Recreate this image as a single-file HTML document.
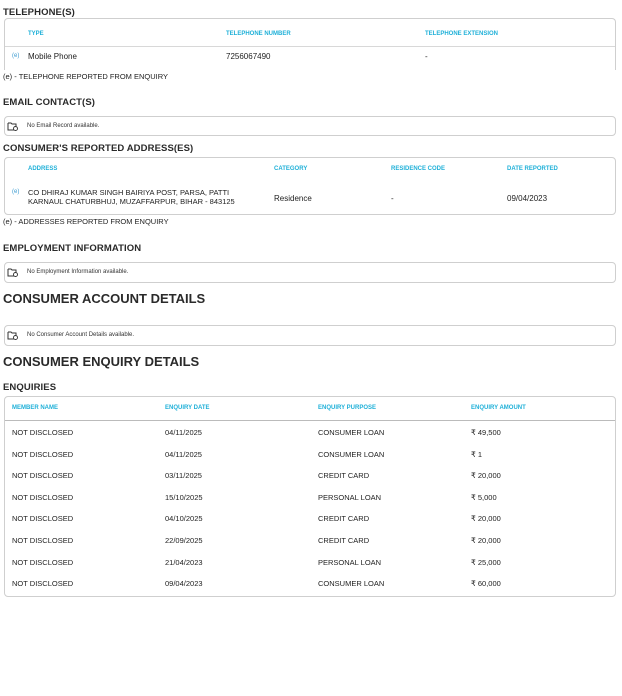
<!DOCTYPE html><html><head><style>
*{margin:0;padding:0;box-sizing:border-box}
body{width:622px;height:696px;background:#fff;font-family:"Liberation Sans",sans-serif;color:#222;position:relative;overflow:hidden}
.a{position:absolute;white-space:nowrap}
.h{font-weight:bold;font-size:9.5px;color:#2a2a2a;letter-spacing:.1px}
.H{font-weight:bold;font-size:13px;color:#2a2a2a}
.th{font-weight:bold;font-size:6px;color:#1fb0d8}
.t{font-size:8px;color:#222}
.s{font-size:7.5px;color:#222}
.box{position:absolute;left:4px;width:612px;border:1px solid #cfcfcf;border-radius:4px}
.e{font-size:6px;color:#3a9ad0}
.ic{position:absolute;left:7px;width:11px;height:9px}
.n{font-size:6px;color:#333}
</style></head><body>
<div class="a h" style="left:3px;top:7px">TELEPHONE(S)</div>
<div class="box" style="top:18px;height:52px;border-bottom:none;border-radius:4px 4px 0 0"></div>
<div class="a" style="left:5px;top:46px;width:610px;border-top:1px solid #d8d8d8"></div>
<div class="a th" style="left:28px;top:31px">TYPE</div>
<div class="a th" style="left:226px;top:31px">TELEPHONE NUMBER</div>
<div class="a th" style="left:425px;top:31px">TELEPHONE EXTENSION</div>
<div class="a e" style="left:12px;top:53px">(e)</div>
<div class="a t" style="left:28px;top:52px">Mobile Phone</div>
<div class="a t" style="left:226px;top:52px">7256067490</div>
<div class="a t" style="left:425px;top:52px">-</div>
<div class="a s" style="left:3px;top:72px">(e) - TELEPHONE REPORTED FROM ENQUIRY</div>

<div class="a h" style="left:3px;top:97px">EMAIL CONTACT(S)</div>
<div class="box" style="top:116px;height:20px"></div>
<svg class="ic" style="top:122px" viewBox="0 0 11 9"><path d="M1 1h3l1 1h4v2M1 1v7h6" fill="none" stroke="#333" stroke-width="1"/><circle cx="8.5" cy="6.5" r="2" fill="none" stroke="#333" stroke-width=".9"/></svg>
<div class="a n" style="left:27px;top:123px">No Email Record available.</div>

<div class="a h" style="left:3px;top:143px">CONSUMER'S REPORTED ADDRESS(ES)</div>
<div class="box" style="top:157px;height:58px"></div>
<div class="a th" style="left:28px;top:166px">ADDRESS</div>
<div class="a th" style="left:274px;top:166px">CATEGORY</div>
<div class="a th" style="left:391px;top:166px">RESIDENCE CODE</div>
<div class="a th" style="left:507px;top:166px">DATE REPORTED</div>
<div class="a e" style="left:12px;top:189px">(e)</div>
<div class="a s" style="left:28px;top:188px;line-height:9px">CO DHIRAJ KUMAR SINGH BAIRIYA POST, PARSA, PATTI<br>KARNAUL CHATURBHUJ, MUZAFFARPUR, BIHAR - 843125</div>
<div class="a t" style="left:274px;top:194px">Residence</div>
<div class="a t" style="left:391px;top:194px">-</div>
<div class="a t" style="left:507px;top:194px">09/04/2023</div>
<div class="a s" style="left:3px;top:217px">(e) - ADDRESSES REPORTED FROM ENQUIRY</div>

<div class="a h" style="left:3px;top:243px">EMPLOYMENT INFORMATION</div>
<div class="box" style="top:262px;height:21px"></div>
<svg class="ic" style="top:268px" viewBox="0 0 11 9"><path d="M1 1h3l1 1h4v2M1 1v7h6" fill="none" stroke="#333" stroke-width="1"/><circle cx="8.5" cy="6.5" r="2" fill="none" stroke="#333" stroke-width=".9"/></svg>
<div class="a n" style="left:27px;top:269px">No Employment Information available.</div>

<div class="a H" style="left:3px;top:291px">CONSUMER ACCOUNT DETAILS</div>
<div class="box" style="top:325px;height:21px"></div>
<svg class="ic" style="top:331px" viewBox="0 0 11 9"><path d="M1 1h3l1 1h4v2M1 1v7h6" fill="none" stroke="#333" stroke-width="1"/><circle cx="8.5" cy="6.5" r="2" fill="none" stroke="#333" stroke-width=".9"/></svg>
<div class="a n" style="left:27px;top:332px">No Consumer Account Details available.</div>

<div class="a H" style="left:3px;top:354px">CONSUMER ENQUIRY DETAILS</div>
<div class="a h" style="left:3px;top:382px">ENQUIRIES</div>
<div class="box" style="top:396px;height:201px"></div>
<div class="a" style="left:5px;top:420px;width:610px;border-top:1px solid #bbb"></div>
<div class="a th" style="left:12px;top:405px">MEMBER NAME</div>
<div class="a th" style="left:165px;top:405px">ENQUIRY DATE</div>
<div class="a th" style="left:318px;top:405px">ENQUIRY PURPOSE</div>
<div class="a th" style="left:471px;top:405px">ENQUIRY AMOUNT</div>
<div class="a s" style="left:12px;top:422px;line-height:21.6px">NOT DISCLOSED<br>NOT DISCLOSED<br>NOT DISCLOSED<br>NOT DISCLOSED<br>NOT DISCLOSED<br>NOT DISCLOSED<br>NOT DISCLOSED<br>NOT DISCLOSED</div>
<div class="a s" style="left:165px;top:422px;line-height:21.6px">04/11/2025<br>04/11/2025<br>03/11/2025<br>15/10/2025<br>04/10/2025<br>22/09/2025<br>21/04/2023<br>09/04/2023</div>
<div class="a s" style="left:318px;top:422px;line-height:21.6px">CONSUMER LOAN<br>CONSUMER LOAN<br>CREDIT CARD<br>PERSONAL LOAN<br>CREDIT CARD<br>CREDIT CARD<br>PERSONAL LOAN<br>CONSUMER LOAN</div>
<div class="a s" style="left:471px;top:422px;line-height:21.6px">₹ 49,500<br>₹ 1<br>₹ 20,000<br>₹ 5,000<br>₹ 20,000<br>₹ 20,000<br>₹ 25,000<br>₹ 60,000</div>
</body></html>
